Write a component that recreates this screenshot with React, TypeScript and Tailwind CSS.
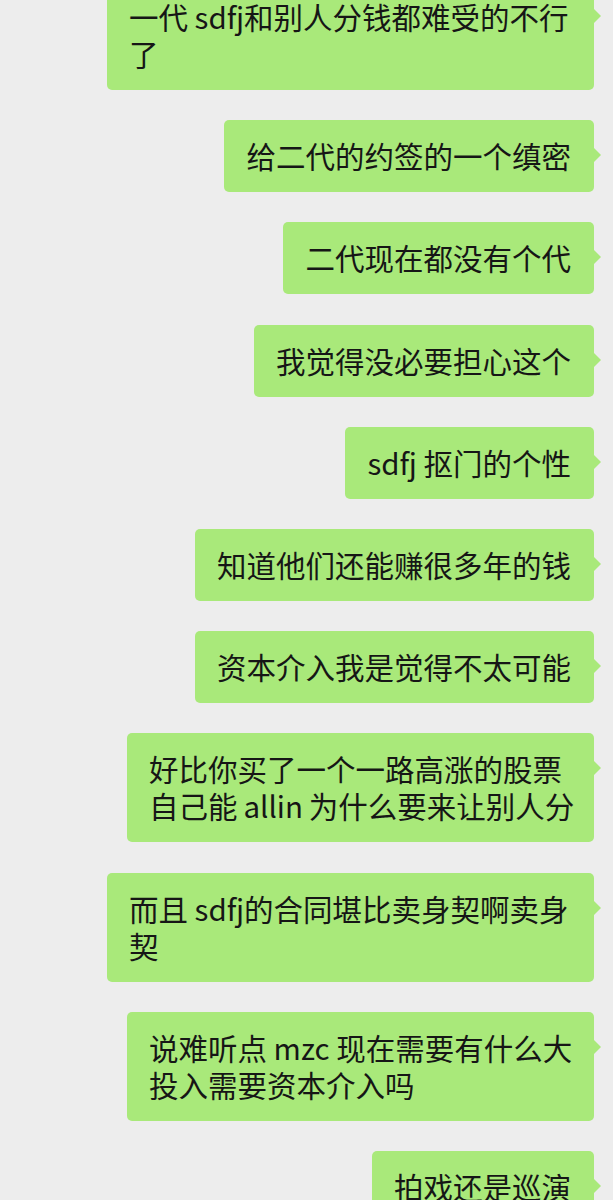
import React from "react";

type Msg = { body: React.ReactNode; w?: string };

const msgs: Msg[] = [
  { body: <>一代 sdfj和别人分钱都难受的不行<br />了</>, w: "w-[487px]" },
  { body: <>给二代的约签的一个缜密</> },
  { body: <>二代现在都没有个代</> },
  { body: <>我觉得没必要担心这个</> },
  { body: <>sdfj 抠门的个性</> },
  { body: <>知道他们还能赚很多年的钱</> },
  { body: <>资本介入我是觉得不太可能</> },
  { body: <>好比你买了一个一路高涨的股票<br />自己能{"\u2009"}allin{"\u2009"}为什么要来让别人分</>, w: "w-[467px]" },
  { body: <>而且 sdfj的合同堪比卖身契啊卖身<br />契</>, w: "w-[487px]" },
  { body: <>说难听点 mzc 现在需要有什么大<br />投入需要资本介入吗</>, w: "w-[467px]" },
  { body: <>拍戏还是巡演</> },
];

function Bubble({ m }: { m: Msg }) {
  return (
    <div className="flex justify-end pr-[19px]">
      <div className="relative">
        <div
          className={`rounded-[5px] bg-[#a9e97a] pl-[22px] pr-[23px] pt-[17px] pb-[18px] text-[29.5px] leading-[37px] text-[#161616] whitespace-nowrap ${m.w ?? ""}`}
        >
          {m.body}
        </div>
        <div className="absolute right-[-7px] top-[28px] h-0 w-0 border-y-[7px] border-l-[7px] border-y-transparent border-l-[#a9e97a]" />
      </div>
    </div>
  );
}

export default function App() {
  return (
    <div
      className="h-[1200px] w-[613px] overflow-hidden bg-[#ededed]"
      style={{ fontFamily: '"Noto Sans CJK SC", "Noto Sans", sans-serif' }}
    >
      <div className="-mt-[19px] flex flex-col gap-[30.2px]">
        {msgs.map((m, i) => (
          <Bubble key={i} m={m} />
        ))}
      </div>
    </div>
  );
}
